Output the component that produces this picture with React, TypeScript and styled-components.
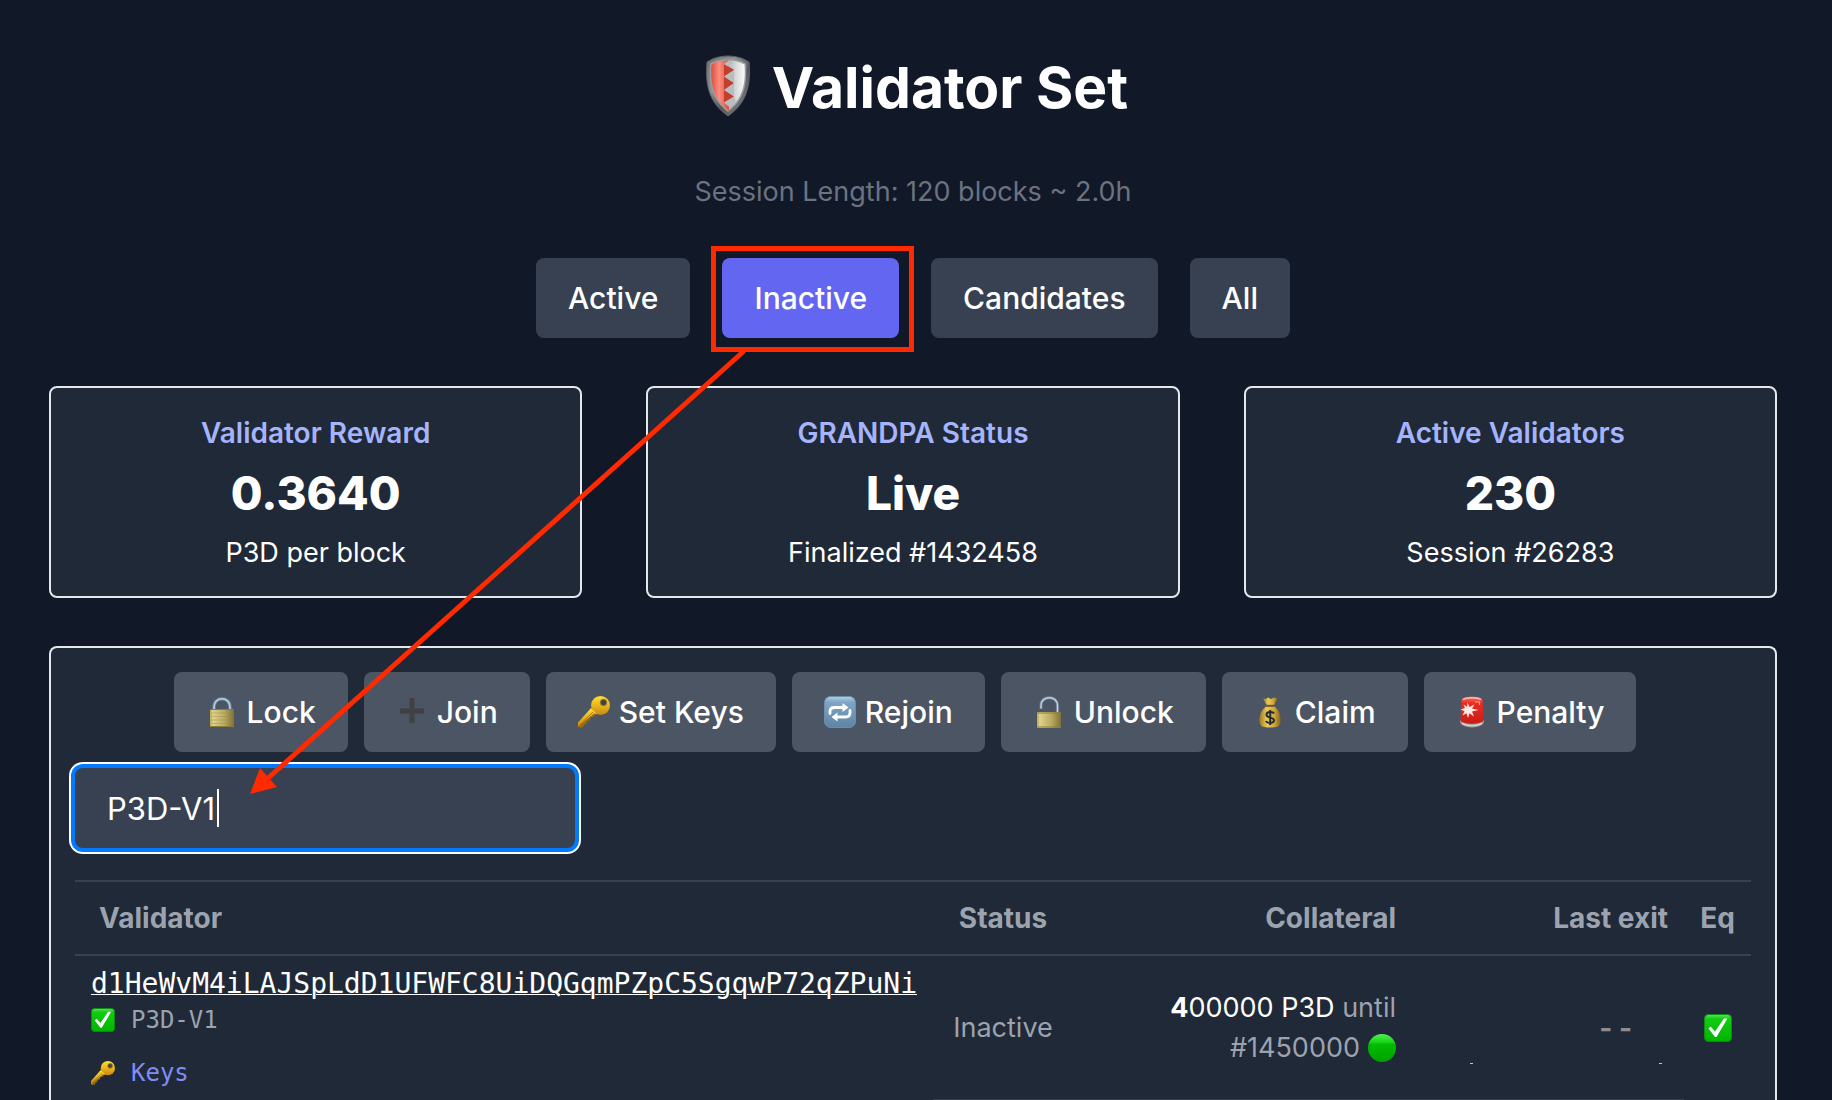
import React, { useState } from 'react';
import styled, { createGlobalStyle } from 'styled-components';

const sans = `Inter, "Liberation Sans", sans-serif`;
const mono = `"DejaVu Sans Mono", "Liberation Mono", monospace`;

const GlobalStyle = createGlobalStyle`
  *, *::before, *::after { box-sizing: border-box; }
  html, body { margin: 0; background: #111827; }
  body { font-family: ${sans}; color: #ffffff; overflow: hidden; }
  button, input { font: inherit; color: inherit; }
`;

const Page = styled.main`
  position: relative;
  display: flex;
  flex-direction: column;
  height: 100vh;
  padding: 52px 55px 0 49px;
  overflow: hidden;
`;

const Title = styled.h1`
  display: flex;
  align-items: center;
  justify-content: center;
  gap: 14px;
  margin: 0 0 48px;
  font-size: 57px;
  line-height: 72px;
  font-weight: 700;
`;

const SessionInfo = styled.p`
  margin: 0 0 46px;
  font-size: 27px;
  line-height: 40px;
  text-align: center;
  color: #6b7280;
`;

const Filters = styled.nav`
  display: flex;
  justify-content: center;
  gap: 32px;
  margin-bottom: 48px;
`;

const FilterButton = styled.button<{ $active: boolean }>`
  position: relative;
  height: 80px;
  padding: 0 32px;
  border: 0;
  border-radius: 8px;
  font-size: 30px;
  font-weight: 500;
  line-height: 48px;
  background: ${(p) => (p.$active ? '#6366f1' : '#374151')};
`;

const Highlight = styled.span`
  position: absolute;
  inset: -12px -15px -14px -11px;
  border: 5px solid #ff2a00;
`;

const Cards = styled.section`
  display: grid;
  grid-template-columns: repeat(3, 1fr);
  gap: 64px;
  margin-bottom: 48px;
`;

const Card = styled.article`
  padding: 25px 24px 23px;
  border: 2px solid #e5e7eb;
  border-radius: 8px;
  background: #1f2937;
  text-align: center;
`;

const CardLabel = styled.h2`
  margin: 0 0 8px;
  font-size: 28px;
  line-height: 40px;
  font-weight: 600;
  color: #a5b4fc;
`;

const CardValue = styled.p`
  margin: 0 0 8px;
  font-size: 46px;
  line-height: 64px;
  font-weight: 800;
`;

const CardNote = styled.p`
  margin: 0;
  font-size: 27px;
  line-height: 40px;
`;

const Panel = styled.section`
  flex: 1 0 auto;
  padding: 24px;
  border: 2px solid #e5e7eb;
  border-bottom: 0;
  border-radius: 8px 8px 0 0;
  background: #1f2937;
`;

const Toolbar = styled.div`
  display: flex;
  justify-content: center;
  gap: 16px;
  margin-bottom: 16px;
  padding-right: 16px;
`;

const ActionButton = styled.button`
  display: flex;
  align-items: center;
  gap: 9px;
  height: 80px;
  padding: 0 32px;
  border: 0;
  border-radius: 8px;
  font-size: 30px;
  font-weight: 500;
  line-height: 48px;
  background: #4b5563;
`;

const SearchBox = styled.label`
  position: relative;
  display: block;
  width: 500px;
  margin-bottom: 32px;
`;

const SearchInput = styled.input`
  display: block;
  width: 100%;
  height: 80px;
  padding: 0 32px;
  border: 0;
  border-radius: 8px;
  outline: 0;
  font-size: 31px;
  background: #374151;
  caret-color: transparent;
  box-shadow: 0 0 0 4px #007aff, 0 0 0 6px #ffffff;
`;

const Caret = styled.span`
  position: absolute;
  left: 142px;
  top: 21px;
  width: 2px;
  height: 38px;
  background: #ffffff;
`;

const Table = styled.table`
  width: 100%;
  border-collapse: separate;
  border-spacing: 0;
  table-layout: fixed;
  font-size: 27px;
  line-height: 40px;
  color: #9ca3af;
`;

type Align = 'left' | 'center' | 'right';

const Col = styled.col<{ $width?: number }>`
  width: ${(p) => (p.$width ? `${p.$width}px` : 'auto')};
`;

const HeadCell = styled.th<{ $align: Align; $inset?: boolean }>`
  height: 76px;
  padding: 0 16px 0 ${(p) => (p.$inset ? 24 : 16)}px;
  border-top: 2px solid #374151;
  border-bottom: 2px solid #374151;
  font-size: 28px;
  font-weight: 700;
  text-align: ${(p) => p.$align};
  white-space: nowrap;
`;

const Cell = styled.td<{ $align: Align; $ruled?: boolean; $top?: boolean }>`
  height: 145px;
  padding: ${(p) => (p.$top ? '8px' : '0')} 16px 0;
  border-bottom: 2px solid ${(p) => (p.$ruled ? '#374151' : 'transparent')};
  text-align: ${(p) => p.$align};
  vertical-align: ${(p) => (p.$top ? 'top' : 'middle')};
`;

const Address = styled.a`
  display: block;
  font-family: ${mono};
  font-size: 28px;
  line-height: 40px;
  color: #ffffff;
  text-decoration: underline;
  text-decoration-thickness: 1px;
  white-space: nowrap;
`;

const Meta = styled.div`
  display: flex;
  align-items: center;
  gap: 16px;
  font-family: ${mono};
  font-size: 24px;
  line-height: 32px;

  & + & {
    margin-top: 21px;
  }
`;

const KeysLink = styled.a`
  color: #818cf8;
  text-decoration: none;
`;

const Amount = styled.span`
  color: #ffffff;
`;

const Until = styled.span`
  display: flex;
  align-items: center;
  justify-content: flex-end;
  gap: 8px;
`;

const Exit = styled.div`
  position: relative;
  padding-right: 36px;
  font-size: 28px;
  font-weight: 700;
  color: #8d8d90;
`;

const Speck = styled.i<{ $right: number }>`
  position: absolute;
  right: ${(p) => p.$right}px;
  bottom: -16px;
  width: 3px;
  height: 1px;
  background: #c4c7cc;
`;

const CenterIcon = styled.div`
  display: flex;
  justify-content: center;
`;

const Overlay = styled.svg`
  position: absolute;
  left: 0;
  top: 0;
  pointer-events: none;
`;

const Icon = styled.svg`
  display: block;
  flex: none;
`;

const Shield = () => (
  <Icon width="60" height="66" viewBox="0 0 60 66" aria-hidden="true">
    <defs>
      <linearGradient id="shRim" x1="0" x2="1" y1="0" y2="1">
        <stop offset="0" stopColor="#6d6e70" />
        <stop offset=".35" stopColor="#8e9092" />
        <stop offset=".6" stopColor="#55575a" />
        <stop offset="1" stopColor="#8b8d90" />
      </linearGradient>
      <linearGradient id="shRed" x1="0" x2="1">
        <stop offset="0" stopColor="#d9503f" />
        <stop offset=".35" stopColor="#ff8d7f" />
        <stop offset=".65" stopColor="#e8604e" />
        <stop offset="1" stopColor="#b93826" />
      </linearGradient>
      <linearGradient id="shWhite" x1="0" x2="1">
        <stop offset="0" stopColor="#b4b6b8" />
        <stop offset=".55" stopColor="#dcdddf" />
        <stop offset="1" stopColor="#fafafa" />
      </linearGradient>
    </defs>
    <path d="M30 1C38 1 45 3 51 7C53 30 49 48 30 61C11 48 7 30 9 7C15 3 22 1 30 1Z" fill="url(#shRim)" stroke="#5c5e61" />
    <path d="M30 4C37 4 43 5.500 48 8.500C49.500 30 46 45 30 57C14 45 10.500 30 12 8.500C17 5.500 23 4 30 4Z" fill="#9b9da0" />
    <path d="M30 5.500C36 5.500 42 7 46.500 9.500C48 30 44 44 30 55Z" fill="url(#shWhite)" />
    <path d="M31 5.500C24 5.500 18 7 13.500 9.500C12 30 16 44 31 56L31 51L26 47.500L36 41.500L26 35L36 28L26 21.500L36 15L26 9Z" fill="url(#shRed)" />
    <path d="M26 9L36 15L26 21.500ZM26 21.500L36 28L26 35ZM26 35L36 41.500L26 47.500Z" fill="#c33f2d" />
    <path d="M31 5.500L26 9L30 11.500L35 8ZM36 15L26 21.500L36 28ZM36 28L26 35L36 41.500ZM36 41.500L26 47.500L32 52.500L38 47Z" fill="#babcbe" />
  </Icon>
);

const LockIcon = ({ open = false }: { open?: boolean }) => {
  const id = open ? 'lkOpen' : 'lkShut';
  return (
    <Icon width="32" height="32" viewBox="0 0 32 32" aria-hidden="true">
      <defs>
        <linearGradient id={id} x1="0" x2="1">
          <stop offset="0" stopColor="#b8a654" />
          <stop offset=".12" stopColor="#ded18a" />
          <stop offset=".6" stopColor="#b9aa60" />
          <stop offset="1" stopColor="#7d7035" />
        </linearGradient>
      </defs>
      {open ? (
        <>
          <path d="M8 13V9.500C8 -1 24.500 -1 24.500 9.500V17" fill="none" stroke="#66788c" strokeWidth="3.200" />
          <path d="M8 12.500V9.500C8 -1 24.500 -1 24.500 9.500V17" fill="none" stroke="#bdd0e0" strokeWidth="1.500" />
          <path d="M4 16H28V32H4Z" fill={`url(#${id})`} />
          <path d="M4 31H28M4 17H28" stroke="#8b7b3a" strokeWidth="1" />
        </>
      ) : (
        <>
          <path d="M8 14V11C8 0 24 0 24 11V14" fill="none" stroke="#6d8196" strokeWidth="3.400" />
          <path d="M8 14V11C8 0 24 0 24 11V14" fill="none" stroke="#b7cfe3" strokeWidth="1.600" />
          <path d="M4 13H28V31H4Z" fill={`url(#${id})`} />
          <path d="M4 30.500H28M4 13.500H28" stroke="#8b7b3a" strokeWidth="1" />
          <path d="M5 17H27M5 20.500H27M5 24H27M5 27.500H27" stroke="#9c8d49" strokeWidth=".7" opacity=".6" />
        </>
      )}
    </Icon>
  );
};

const PlusIcon = () => (
  <Icon width="32" height="32" viewBox="0 0 32 32" aria-hidden="true">
    <path d="M13.500 2H18.500V12.500H28V17.500H18.500V27H13.500V17.500H4V12.500H13.500Z" fill="#404143" />
  </Icon>
);

const KeyIcon = ({ size = 32 }: { size?: number }) => (
  <Icon width={size} height={size} viewBox="0 0 32 32" aria-hidden="true">
    <defs>
      <linearGradient id={`key${size}`} x1="0" x2="0" y1="0" y2="1">
        <stop offset="0" stopColor="#ffdf2e" />
        <stop offset=".5" stopColor="#eab51c" />
        <stop offset="1" stopColor="#c88912" />
      </linearGradient>
    </defs>
    <path d="M14 14L0 27.500V31.500H5L6 28.500L8.500 28L9 25L12 24.500L12.500 21.500L15.500 21L19 17.500Z" fill="#9b6a0c" />
    <circle cx="22.500" cy="9.500" r="9.500" fill={`url(#key${size})`} />
    <path d="M13 12L0 26.500V30.500L16 17.500L19 18Z" fill={`url(#key${size})`} />
    <path d="M15 16L1.500 29" stroke="#a8750f" strokeWidth="1" />
    <circle cx="25.500" cy="6.500" r="3.200" fill="#3b4250" stroke="#a87a10" strokeWidth="1" />
  </Icon>
);

const RepeatIcon = () => (
  <Icon width="32" height="32" viewBox="0 0 32 32" aria-hidden="true">
    <defs>
      <linearGradient id="rep" x1="0" x2="0" y1="0" y2="1">
        <stop offset="0" stopColor="#b5d2e8" />
        <stop offset=".18" stopColor="#7fa6c4" />
        <stop offset="1" stopColor="#5d84a5" />
      </linearGradient>
    </defs>
    <rect x=".5" y=".5" width="31" height="31" rx="6" fill="url(#rep)" stroke="#6e8ea8" />
    <path d="M6 17.500V15.500C6 12.500 8 11.500 10.500 11.500H20M26 14.500V16.500C26 19.500 24 21 21.500 21H12" fill="none" stroke="#ffffff" strokeWidth="2.800" strokeLinecap="round" />
    <path d="M18.500 7L24.500 11.500L18.500 16ZM13.500 16.500L7.500 21L13.500 25.500Z" fill="#ffffff" />
  </Icon>
);

const MoneyIcon = () => (
  <Icon width="32" height="32" viewBox="0 0 32 32" aria-hidden="true">
    <defs>
      <linearGradient id="bag" x1="0" x2="1">
        <stop offset="0" stopColor="#9a7820" />
        <stop offset=".35" stopColor="#e9c95a" />
        <stop offset=".7" stopColor="#d0a838" />
        <stop offset="1" stopColor="#84641a" />
      </linearGradient>
    </defs>
    <path d="M9 2L12 3L14 1.500L17 3L20 1.500L23.500 2.500L20 9H12.500Z" fill="url(#bag)" />
    <path d="M12 10.500H20.500C26 15 27 20 26.500 26C26 31 22 31.500 16 31.500S6 31 5.500 26C5 20 6.500 15 12 10.500Z" fill="url(#bag)" />
    <path d="M12 9.700H20.500" stroke="#76571a" strokeWidth="1.800" />
    <path d="M20 17.500C19 15.500 12.500 15.300 12.500 18.800C12.500 22.500 20 20.800 20 24.300C20 27.800 13 27.500 12 25M16.200 14V29" fill="none" stroke="#252a33" strokeWidth="2" />
  </Icon>
);

const SirenIcon = () => (
  <Icon width="32" height="32" viewBox="0 0 32 32" aria-hidden="true">
    <defs>
      <linearGradient id="sir" x1="0" x2="0" y1="0" y2="1">
        <stop offset="0" stopColor="#ff7468" />
        <stop offset=".25" stopColor="#e92a20" />
        <stop offset="1" stopColor="#c81d16" />
      </linearGradient>
    </defs>
    <path d="M4 25C4 33.500 28 33.500 28 25L26 22H6Z" fill="#a6a29d" />
    <path d="M6 27C10 30.500 22 30.500 26 27" fill="none" stroke="#d8d5d0" strokeWidth="1.200" />
    <path d="M5.500 4C5.500 -.5 26.500 -.5 26.500 4L27.500 24C27 29 5 29 4.500 24Z" fill="url(#sir)" />
    <path d="M7 3.500C10 1 22 1 25 3.500" fill="none" stroke="#ffb8ad" strokeWidth="1.500" />
    <path d="M19 6H23.500V9" fill="none" stroke="#ff9b90" strokeWidth="1.200" />
    <path d="M11.500 6.500L13.500 11L18.500 8.500L16 12.500L22.500 14L16 15.500L18 20.500L13.500 17.200L12 22L10.500 17.200L6.500 19.500L8.500 15.200L4.500 13.500L9 12L7.500 8.500L11 10.800Z" fill="#ffe9e4" />
  </Icon>
);

const CheckIcon = ({ size }: { size: number }) => (
  <Icon width={size} height={size} viewBox="0 0 28 28" role="img" aria-label="Yes">
    <defs>
      <linearGradient id={`chk${size}`} x1="0" x2="0" y1="0" y2="1">
        <stop offset="0" stopColor="#5fe45f" />
        <stop offset=".16" stopColor="#12cc12" />
        <stop offset="1" stopColor="#00b400" />
      </linearGradient>
    </defs>
    <rect x=".5" y=".5" width="27" height="27" rx="4" fill={`url(#chk${size})`} stroke="#0a8f12" />
    <path d="M4.500 14.500L6.500 12.500L11 17.500L20 4.500H23.500L12.500 23H11Z" fill="#ffffff" />
  </Icon>
);

const GreenDot = () => (
  <Icon width="28" height="28" viewBox="0 0 28 28" role="img" aria-label="Eligible">
    <defs>
      <linearGradient id="dot" x1="0" x2="0" y1="0" y2="1">
        <stop offset="0" stopColor="#52f052" />
        <stop offset=".3" stopColor="#16d316" />
        <stop offset=".36" stopColor="#02bc02" />
        <stop offset="1" stopColor="#00a000" />
      </linearGradient>
    </defs>
    <circle cx="14" cy="14" r="14" fill="url(#dot)" />
  </Icon>
);

const filters = ['Active', 'Inactive', 'Candidates', 'All'];

const stats = [
  { label: 'Validator Reward', value: '0.3640', note: 'P3D per block' },
  { label: 'GRANDPA Status', value: 'Live', note: 'Finalized #1432458' },
  { label: 'Active Validators', value: '230', note: 'Session #26283' },
];

const actions = [
  { label: 'Lock', icon: <LockIcon /> },
  { label: 'Join', icon: <PlusIcon /> },
  { label: 'Set Keys', icon: <KeyIcon /> },
  { label: 'Rejoin', icon: <RepeatIcon /> },
  { label: 'Unlock', icon: <LockIcon open /> },
  { label: 'Claim', icon: <MoneyIcon /> },
  { label: 'Penalty', icon: <SirenIcon /> },
];

export default function App() {
  const [filter, setFilter] = useState('Inactive');
  const [query, setQuery] = useState('P3D-V1');

  return (
    <>
      <GlobalStyle />
      <Page>
        <Title>
          <Shield />
          Validator Set
        </Title>
        <SessionInfo>Session Length: 120 blocks ~ 2.0h</SessionInfo>

        <Filters>
          {filters.map((name) => (
            <FilterButton key={name} type="button" $active={name === filter} onClick={() => setFilter(name)}>
              {name}
              {name === 'Inactive' && <Highlight />}
            </FilterButton>
          ))}
        </Filters>

        <Cards>
          {stats.map((s) => (
            <Card key={s.label}>
              <CardLabel>{s.label}</CardLabel>
              <CardValue>{s.value}</CardValue>
              <CardNote>{s.note}</CardNote>
            </Card>
          ))}
        </Cards>

        <Panel>
          <Toolbar>
            {actions.map((a) => (
              <ActionButton key={a.label} type="button">
                {a.icon}
                {a.label}
              </ActionButton>
            ))}
          </Toolbar>

          <SearchBox>
            <SearchInput
              type="text"
              aria-label="Search validators"
              value={query}
              onChange={(e) => setQuery(e.target.value)}
            />
            <Caret />
          </SearchBox>

          <Table>
            <colgroup>
              <Col />
              <Col $width={140} />
              <Col $width={339} />
              <Col $width={272} />
              <Col $width={67} />
            </colgroup>
            <thead>
              <tr>
                <HeadCell $align="left" $inset>Validator</HeadCell>
                <HeadCell $align="center">Status</HeadCell>
                <HeadCell $align="right">Collateral</HeadCell>
                <HeadCell $align="right">Last exit</HeadCell>
                <HeadCell $align="center">Eq</HeadCell>
              </tr>
            </thead>
            <tbody>
              <tr>
                <Cell $align="left" $top>
                  <Address href="#validator">d1HeWvM4iLAJSpLdD1UFWFC8UiDQGqmPZpC5SgqwP72qZPuNi</Address>
                  <Meta>
                    <CheckIcon size={24} />
                    P3D-V1
                  </Meta>
                  <Meta>
                    <KeyIcon size={24} />
                    <KeysLink href="#keys">Keys</KeysLink>
                  </Meta>
                </Cell>
                <Cell $align="center" $ruled>Inactive</Cell>
                <Cell $align="right" $ruled>
                  <Amount><b>4</b>00000 P3D</Amount> until
                  <Until>
                    #1450000
                    <GreenDot />
                  </Until>
                </Cell>
                <Cell $align="right" $ruled>
                  <Exit>
                    - -
                    <Speck $right={195} />
                    <Speck $right={6} />
                  </Exit>
                </Cell>
                <Cell $align="center">
                  <CenterIcon>
                    <CheckIcon size={28} />
                  </CenterIcon>
                </Cell>
              </tr>
            </tbody>
          </Table>
        </Panel>

        <Overlay width="800" height="800" viewBox="0 0 800 800" aria-hidden="true">
          <path d="M744 351L266 780" stroke="#ff2a00" strokeWidth="5" />
          <path d="M250 794L260 768L277 787Z" fill="#ff2a00" />
        </Overlay>
      </Page>
    </>
  );
}
